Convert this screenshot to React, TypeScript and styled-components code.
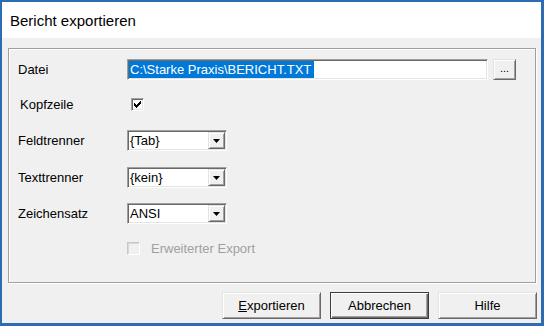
import React from "react";
import styled, { createGlobalStyle, css } from "styled-components";

const GlobalStyle = createGlobalStyle`
  html, body { margin: 0; padding: 0; background: #ffffff; }
  body { font-family: "Liberation Sans", Arial, sans-serif; font-size: 13px; color: #000; }
  * { box-sizing: border-box; }
`;

const sunken = css`
  border: 1px solid;
  border-color: #a0a0a0 #ffffff #ffffff #a0a0a0;
  box-shadow: inset 1px 1px 0 #696969, inset -1px -1px 0 #e3e3e3;
`;

const raised = css`
  border: 1px solid;
  border-color: #e3e3e3 #696969 #696969 #e3e3e3;
  box-shadow: inset 1px 1px 0 #ffffff, inset -1px -1px 0 #a0a0a0;
`;

const Window = styled.div`
  width: 544px;
  height: 326px;
  display: flex;
  flex-direction: column;
  background: #f0f0f0;
  border-style: solid;
  border-color: #2e6bb5;
  border-width: 2px 3px 3px 2px;
`;

const TitleBar = styled.div`
  height: 36px;
  flex: none;
  display: flex;
  align-items: center;
  padding-left: 8px;
  background: #ffffff;
  font-size: 15px;
  color: #000;
`;

const Client = styled.div`
  flex: 1;
  display: flex;
  flex-direction: column;
  padding: 10px 4px 4px 6px;
`;

const GroupBox = styled.div`
  height: 235px;
  margin-right: 1px;
  display: flex;
  flex-direction: column;
  padding-left: 9px;
  border: 1px solid #a0a0a0;
  box-shadow: inset 1px 1px 0 #ffffff, 1px 1px 0 #ffffff;
`;

const Row = styled.div<{ $mt: number }>`
  display: flex;
  align-items: center;
  height: 21px;
  margin-top: ${(p) => p.$mt}px;
`;

const Label = styled.div<{ $indent?: number }>`
  width: 109px;
  flex: none;
  padding-left: ${(p) => p.$indent ?? 0}px;
  white-space: nowrap;
`;

const TextField = styled.div`
  ${sunken};
  width: 361px;
  height: 21px;
  background: #ffffff;
  display: flex;
  align-items: stretch;
  padding: 1px;
`;

const Selection = styled.span`
  display: flex;
  align-items: center;
  padding: 0 3px 0 1px;
  background: #0078d7;
  color: #ffffff;
  white-space: nowrap;
`;

const BrowseButton = styled.button`
  ${raised};
  width: 23px;
  height: 21px;
  margin-left: 5px;
  padding: 0 0 5px;
  background: #f0f0f0;
  font-family: "Liberation Sans", Arial, sans-serif;
  font-size: 11px;
  display: flex;
  align-items: flex-end;
  justify-content: center;
  color: #000;
`;

const CheckBox = styled.div<{ $disabled?: boolean; $ml?: number }>`
  ${sunken};
  width: 13px;
  height: 13px;
  margin-left: ${(p) => p.$ml ?? 0}px;
  background: ${(p) => (p.$disabled ? "#f0f0f0" : "#ffffff")};
  display: flex;
  align-items: center;
  justify-content: center;
  ${(p) =>
    p.$disabled &&
    css`
      border-color: #c8c8c8 #ffffff #ffffff #c8c8c8;
      box-shadow: inset 1px 1px 0 #d8d8d8, inset -1px -1px 0 #f0f0f0;
    `}
`;

const CheckText = styled.span<{ $disabled?: boolean }>`
  margin-left: 11px;
  color: ${(p) => (p.$disabled ? "#a0a0a0" : "#000")};
  white-space: nowrap;
`;

const Combo = styled.div`
  ${sunken};
  width: 100px;
  height: 21px;
  background: #ffffff;
  display: flex;
  align-items: center;
  padding: 1px;
`;

const ComboText = styled.span`
  flex: 1;
  padding-left: 1px;
  white-space: nowrap;
`;

const DropButton = styled.div`
  ${raised};
  width: 17px;
  height: 17px;
  background: #f0f0f0;
  display: flex;
  align-items: center;
  justify-content: center;
`;

const ButtonRow = styled.div`
  display: flex;
  justify-content: flex-end;
  gap: 9px;
  margin-top: 9px;
`;

const DialogButton = styled.button<{ $default?: boolean }>`
  ${raised};
  width: 99px;
  height: 27px;
  padding: 0;
  background: #f0f0f0;
  font-family: "Liberation Sans", Arial, sans-serif;
  font-size: 13px;
  color: #000;
  ${(p) =>
    p.$default &&
    css`
      border: 1px solid #3c3c3c;
      box-shadow: inset 1px 1px 0 #ffffff, inset -1px -1px 0 #696969,
        inset -2px -2px 0 #a0a0a0;
    `}
`;

const Arrow = () => (
  <svg width="7" height="4" viewBox="0 0 7 4">
    <path d="M0 0 H7 L3.5 4 Z" fill="#000" />
  </svg>
);

const Check = () => (
  <svg width="9" height="9" viewBox="0 0 9 9" shapeRendering="crispEdges">
    <path
      d="M1 3 H2 V4 H3 V5 H4 V4 H5 V3 H6 V2 H7 V1 H8 V4 H7 V5 H6 V6 H5 V7 H4 V8 H3 V7 H2 V6 H1 Z"
      fill="#000"
    />
  </svg>
);

const ComboBox = ({ value }: { value: string }) => (
  <Combo>
    <ComboText>{value}</ComboText>
    <DropButton>
      <Arrow />
    </DropButton>
  </Combo>
);

export default function App() {
  return (
    <>
      <GlobalStyle />
      <Window>
        <TitleBar>Bericht exportieren</TitleBar>
        <Client>
          <GroupBox>
            <Row $mt={10}>
              <Label>Datei</Label>
              <TextField>
                <Selection>C:\Starke Praxis\BERICHT.TXT</Selection>
              </TextField>
              <BrowseButton>...</BrowseButton>
            </Row>
            <Row $mt={14}>
              <Label $indent={2}>Kopfzeile</Label>
              <CheckBox $ml={4}>
                <Check />
              </CheckBox>
            </Row>
            <Row $mt={15}>
              <Label>Feldtrenner</Label>
              <ComboBox value="{Tab}" />
            </Row>
            <Row $mt={16}>
              <Label>Texttrenner</Label>
              <ComboBox value="{kein}" />
            </Row>
            <Row $mt={15}>
              <Label>Zeichensatz</Label>
              <ComboBox value="ANSI" />
            </Row>
            <Row $mt={14}>
              <Label />
              <CheckBox $disabled />
              <CheckText $disabled>Erweiterter Export</CheckText>
            </Row>
          </GroupBox>
          <ButtonRow>
            <DialogButton>
              <u>E</u>xportieren
            </DialogButton>
            <DialogButton $default>Abbrechen</DialogButton>
            <DialogButton>Hilfe</DialogButton>
          </ButtonRow>
        </Client>
      </Window>
    </>
  );
}
